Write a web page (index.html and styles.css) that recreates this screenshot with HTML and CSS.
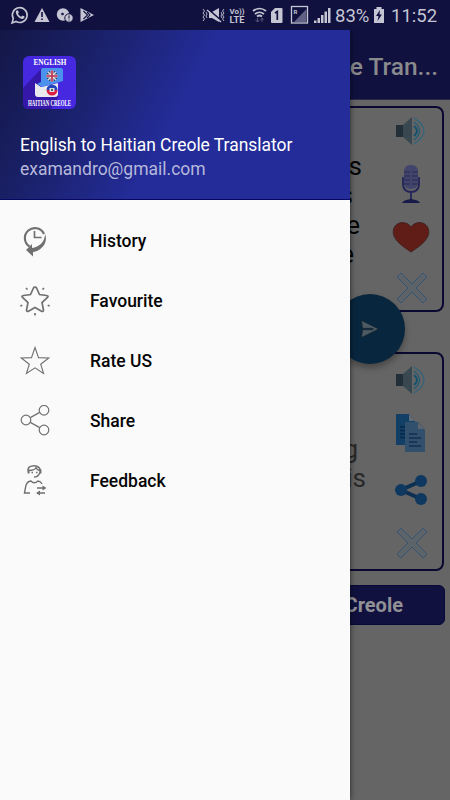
FILE: index.html
```
<!DOCTYPE html>
<html lang="en">
<head>
<meta charset="utf-8">
<title>English to Haitian Creole Translator</title>
<link rel="stylesheet" href="styles.css">
</head>
<body>
<svg class="defs" width="0" height="0">
  <symbol id="speaker" viewBox="0 0 32 28">
    <path d="M1 8h7v12H1z" fill="#222f38"/><path d="M8 8l9-8v28l-9-8z" fill="#394850"/>
    <g fill="none" stroke-width="1.5"><path d="M19 9q6 5 0 10" stroke="#12526f" stroke-width="2"/><path d="M19 5q11 9 0 18" stroke="#285c75"/><path d="M19 1q20 13 0 26" stroke="#3c6478"/></g>
  </symbol>
  <symbol id="cross" viewBox="0 0 32 32">
    <path d="M1 5l4-4 11 11L27 1l4 4-11 11 11 11-4 4-11-11L5 31l-4-4 11-11z" fill="#5c6369" stroke="#365371" stroke-width="1"/>
  </symbol>
</svg>
<div class="screen">
  <header class="status">
    <svg class="notices" viewBox="0 0 100 30" width="100" height="30">
      <path d="M12 23l1.300-4.300a7.400 7.400 0 1 1 2.800 2.800z" fill="none" stroke="#c5c5d3" stroke-width="1.600"/>
      <path d="M16 11c1-1 2-1 2.400.2l.5 1.300-.9 1.200c.8 1.600 1.800 2.400 3.200 3l1.300-1.200 2 1c.5 1-1 2.600-2.600 2.400-3-.4-7-4.700-5.900-7.900z" fill="#c5c5d3"/>
      <path d="M42 8l7.500 14h-15z" fill="#c5c5d3"/><path d="M42 12v5M42 18.500v1.500" stroke="#10113f" stroke-width="1.600"/>
      <circle cx="63" cy="14.500" r="6.200" fill="#c5c5d3"/><circle cx="62.500" cy="14" r="1.300" fill="#10113f"/><circle cx="69" cy="18" r="4.200" fill="#c5c5d3" stroke="#10113f"/><path d="M69 15.500v3M69 19.500v1" stroke="#10113f"/>
      <path d="M80.500 8v14L94 15z" fill="#c5c5d3"/><path d="M83.500 11l4 4-4 4M87 12l3 3-3 3" fill="none" stroke="#10113f" stroke-width="1.100"/>
    </svg>
    <svg viewBox="0 0 130 30" width="130" height="30">
      <g fill="none" stroke="#c5c5d3" stroke-width=".9"><path d="M1 9l1.500 2L1 13l1.500 2L1 17l1.500 2L1 21M4 12l1 2-1 2 1 2M19 12l1 2-1 2 1 2M22 9l-1.500 2 1.500 2-1.500 2 1.500 2-1.500 2 1.500 2"/></g>
      <path d="M7 12h3l7-4v14l-7-4H7z" fill="#c5c5d3"/><path d="M5 8.500l14 12" stroke="#10113f" stroke-width="2"/><path d="M5 10l14 12" stroke="#c5c5d3" stroke-width="1.500"/>
      <text x="27.500" y="14" class="volte" textLength="15" lengthAdjust="spacingAndGlyphs">Vo))</text>
      <text x="27.500" y="22.500" class="volte lte" textLength="15" lengthAdjust="spacingAndGlyphs">LTE</text>
      <g fill="none" stroke="#c5c5d3" stroke-width="1.700"><path d="M51 11q6.500-5 13 0M53 14q4.500-3.500 9 0M55 16.500q2.500-2 5 0"/></g>
      <path d="M55.500 18v4M53.500 20l2 2 2-2M60 22v-4M58.500 20l1.500-2 1.500 2" fill="none" stroke="#55567a"/>
      <path d="M73 8h6.500q1 0 1 1v13q0 1-1 1H70q-1 0-1-1V12z" fill="#c5c5d3"/><path d="M73 13l2.300-1.500V20" fill="none" stroke="#10113f" stroke-width="1.700"/>
      <rect x="89.500" y="6.500" width="16" height="16.500" fill="none" stroke="#c5c5d3" stroke-width="1.300"/><path d="M104.500 9v13H92z" fill="#606184"/><text x="91.500" y="13.500" class="roam">R</text>
      <path d="M112 23v-2.500h2.500V23M115.500 23v-5h2.500v5M119 23v-8h2.500v8M122.500 23V11.500h2.500V23M126 23V8h2.500v15" fill="#c5c5d3"/>
    </svg>
    <span class="charge">83%</span>
    <svg class="battery" viewBox="0 0 12 16" width="12" height="16"><path d="M3.500 0h5v2H11v14H1V2h2.500z" fill="#c5c5d3"/><path d="M7 3L3 9h2.500L4.500 14 9 7.500H6.500z" fill="#10113f"/></svg>
    <span class="clock">11:52</span>
  </header>
  <main class="app">
    <div class="toolbar">e Tran...</div>
    <section class="card source">
      <div class="words"><p>s</p><p class="w2">s</p><p class="w3">e</p><p class="w4">e</p></div>
      <div class="tools">
        <svg class="sound" width="32" height="28"><use href="#speaker"/></svg>
        <svg class="mic" viewBox="0 0 20 38" width="20" height="38"><rect x="3" width="14" height="24" rx="6" fill="#43446b"/><path d="M3 7h6m2 0h6M3 11h6m2 0h6M3 15h6m2 0h6M3 19h6m2 0h6" stroke="#292b58" stroke-width="1"/><path d="M2 12v8q1 7 8 7t8-7v-8M10 27v8" fill="none" stroke="#23255a" stroke-width="1.800"/><path d="M1 38q1-3 9-4 8 1 9 4z" fill="#171949"/></svg>
        <svg class="heart" viewBox="0 0 38 31" width="38" height="31"><path d="M19 5C15-1 5-1 2 6c-4 10 8 18 17 24C28 24 40 16 36 6 33-1 23-1 19 5z" fill="#601c17" stroke="#402522"/></svg>
        <svg class="cross" width="32" height="32"><use href="#cross"/></svg>
      </div>
    </section>
    <section class="card result">
      <div class="words muted"><p>g</p><p>is</p></div>
      <div class="tools">
        <svg class="sound" width="32" height="28"><use href="#speaker"/></svg>
        <svg class="copy" viewBox="0 0 30 38" width="30" height="38"><path d="M0 0h13l6 7v24H0z" fill="#123f66"/><path d="M13 0l6 7h-6z" fill="#626a72"/><path d="M4 13h7M4 16.500h6M4 20h6M4 23.500h6" stroke="#0b2647" stroke-width="1.300"/><path d="M9 8h14l6 7v23H9z" fill="#31506d"/><path d="M22 7l7 9V7z" fill="#656565"/><path d="M22 8v7h6z" fill="#5d646b"/><path d="M13 20h8M13 24h12M13 28h8M13 32h12" stroke="#122c50" stroke-width="1.300"/></svg>
        <svg class="share" viewBox="0 0 32 32" width="32" height="32"><path d="M26 7L6 16l20 9" fill="none" stroke="#0d3052" stroke-width="4"/><g fill="#0e3860"><circle cx="6" cy="16" r="6"/><circle cx="26" cy="7" r="6"/><circle cx="26" cy="25" r="6"/></g></svg>
        <svg class="cross" width="32" height="32"><use href="#cross"/></svg>
      </div>
    </section>
    <div class="language">Creole</div>
  </main>
  <div class="send"><svg viewBox="0 0 18 18" width="18" height="18"><path d="M.5.500L17.500 9 .5 17.500 1.500 9.700H12V8.300H1.500z" fill="#4c5a64" stroke="#17212a" stroke-width=".6"/></svg></div>
  <aside class="drawer">
    <div class="profile">
      <svg class="logo" viewBox="0 0 53 53" width="53" height="53">
        <rect width="53" height="53" rx="6" fill="#4528df"/><path d="M0 32L18 13v21l18 6-8 13H6q-6 0-6-6z" fill="#3518a9"/>
        <path d="M12 27l6 4 17-4v11q0 3-3 3H15q-3 0-3-3z" fill="#e9e9ee"/>
        <path d="M20 12h18q2 0 2 2v11L19 31l-5-3 4-2V14q0-2 2-2z" fill="#4b91ee"/>
        <circle cx="29" cy="20" r="5.500" fill="#26376d"/><path d="M25 16l8 8M33 16l-8 8" stroke="#ddd" stroke-width="1.500"/><path d="M29 14.500v11M23.500 20h11" stroke="#eee" stroke-width="3"/><path d="M29 14.500v11M23.500 20h11" stroke="#bd2948" stroke-width="1.600"/>
        <path d="M23.500 34a5.500 5.500 0 0 1 11 0z" fill="#2444bb"/><path d="M23.500 34a5.500 5.500 0 0 0 11 0z" fill="#d91d43"/><path d="M26.500 32h5v4h-5z" fill="#ddd"/><path d="M28 33h2v2h-2z" fill="#456b61"/>
        <text x="10.500" y="9" class="logo-text" textLength="33" lengthAdjust="spacingAndGlyphs">ENGLISH</text>
        <text x="5" y="50" class="logo-text small" textLength="43" lengthAdjust="spacingAndGlyphs">HAITIAN CREOLE</text>
      </svg>
      <div class="name">English to Haitian Creole Translator</div>
      <div class="email">examandro@gmail.com</div>
    </div>
    <nav>
      <div class="item"><svg viewBox="0 0 30 32"><path d="M9.500 21.500A10 10 0 1 1 24 9" fill="none" stroke="#707070" stroke-width="2.200"/><path d="M14.500 6v6.500h7" fill="none" stroke="#707070" stroke-width="1.700"/><path d="M25 9c3.500 8-3 17-12 18v4.500l-7-6.500 6-6v4c7-1 13-6 13-14z" fill="#707070"/></svg><span>History</span></div>
      <div class="item"><svg viewBox="0 0 30 32"><path d="M15 2q1 0 1.500 1l3 6.500 7 1q2.500.5 1 2l-5.500 5 1.500 7.500q0 2-2 1.200L15 22.500l-6.500 3.700q-2 .8-2-1.200L8 17.500l-5.500-5q-1.500-1.500 1-2l7-1L13.500 3q.5-1 1.500-1z" fill="none" stroke="#707070" stroke-width="1.700"/><path d="M6 3l1.500 1.500M24 3l-1.500 1.500M.3 21l2-.8M29.700 21l-2-.8M15 28v2.500" stroke="#707070" stroke-width="1.700"/></svg><span>Favourite</span></div>
      <div class="item"><svg viewBox="0 0 30 32"><path d="M15 2.500l3.500 10.100 10.200.4-8 6.200 2.900 9.300L15 22.800 6.400 28.500l2.900-9.300-8-6.200 10.200-.4z" fill="none" stroke="#707070" stroke-width="1.100"/></svg><span>Rate US</span></div>
      <div class="item"><svg viewBox="0 0 30 32"><g fill="none" stroke="#707070" stroke-width="1.200"><circle cx="6" cy="15" r="4.800"/><circle cx="24" cy="5.300" r="4.800"/><circle cx="24" cy="25" r="4.800"/><path d="M10.300 12.600l9.400-5.200M10.300 17.400l9.400 5.200"/></g></svg><span>Share</span></div>
      <div class="item"><svg viewBox="0 0 30 32"><g fill="none" stroke="#707070" stroke-width="1.400"><path d="M9 8C6 2 11 .8 14 .8c5 0 8 4 5.500 7.700Q18 12 14 12M9 5.500c5 0 6-1 7-3 1 2 2 3 4 3"/><path d="M8.500 4.500v4M20.500 4.500v4" stroke-width="1.800"/><path d="M10 28H4.500l1.200-6.500q.8-5 5.300-5.500Q14 19.500 18 16q3 .5 4 3M17 23h8M25 28h-8"/></g><path d="M22.500 20.500l4 2.500-4 2.500zM20 25.500L16 28l4 2.500z" fill="#707070"/><path d="M11.500 7.500h1.500M16 7.500h1.500" stroke="#707070" stroke-width="1.300"/></svg><span>Feedback</span></div>
    </nav>
  </aside>
</div>
</body>
</html>
```
FILE: styles.css
```
* { box-sizing: border-box; }
body, p { margin: 0; }
body { font-family: Roboto, sans-serif; }
.defs { position: absolute; }
.screen { position: relative; width: 450px; height: 800px; overflow: hidden; background: #656565; }
.status { display: flex; align-items: center; height: 30px; background: #10113f; color: #c5c5d3; font-size: 18.5px; line-height: 30px; white-space: nowrap; }
.notices { margin-right: 102px; }
.charge { width: 38px; margin-left: 3px; padding-top: 1px; }
.battery { margin-right: 6px; }
.clock { padding-top: 1px; }
.volte { font: bold 8px Roboto, sans-serif; fill: #c5c5d3; }
.lte { font-size: 9px; }
.roam { font: bold 6px Roboto, sans-serif; fill: #c5c5d3; }
.app { display: flex; flex-direction: column; height: 770px; }
.toolbar { height: 70px; padding: 0 12px 0 0; background: #10113f; color: #8a8a8d; font-size: 24.5px; font-weight: 500; line-height: 73px; text-align: right; border-bottom: 1px solid #27284a; }
.card { display: flex; justify-content: flex-end; gap: 31px; margin: 6px 6px 0 7px; height: 206px; border: 2px solid #0a0830; border-radius: 8px; }
.words { padding-top: 44px; text-align: right; font-size: 26px; line-height: 29.3px; color: #050505; }
.w2 { padding-right: 9px; }
.w3 { padding-right: 2px; }
.w4 { padding-right: 8px; }
.tools { display: flex; flex-direction: column; align-items: center; width: 38px; margin-right: 12px; padding-top: 9px; }
.source .words { margin-right: -1px; }
.mic { margin-top: 20px; }
.heart { margin-top: 19px; }
.source .cross { margin: 19px 0 0 1px; }
.result { height: 219px; margin-top: 40px; gap: 26px; }
.muted { padding-top: 81px; color: #282828; }
.muted p:first-child { padding-right: 8px; }
.result .tools { padding-top: 12px; }
.copy { margin-top: 20px; }
.share { margin-top: 22px; }
.result .cross { margin: 21px 0 0 1px; }
.language { height: 40px; margin: 14px 5px 0; padding-right: 41px; border: 1px solid #08083a; border-radius: 6px; background: #11113f; color: #909095; font-size: 20px; font-weight: 700; line-height: 39px; text-align: right; }
.send { position: absolute; left: 335px; top: 294px; width: 70px; height: 70px; padding: 26px; border-radius: 50%; background: #08263e; box-shadow: 0 4px 6px rgba(0,0,0,.3); }
.send svg { display: block; }
.drawer { position: absolute; left: 0; top: 30px; width: 350px; height: 770px; background: #fafafa; box-shadow: 0 0 6px rgba(0,0,0,.65); clip-path: inset(0 -12px 0 0); }
.profile { height: 170px; padding: 26px 20px 0; border-bottom: 1px solid #070862; background: linear-gradient(118deg, #131747 0%, #1a2066 22%, #232c98 50%, #242c99 100%); color: #fff; }
.logo { display: block; margin: 0 0 26px 3px; }
.logo-text { font: bold 8.5px "Liberation Serif", serif; fill: #fff; }
.logo-text.small { font-size: 8px; }
.name { font-size: 17.45px; line-height: 20px; white-space: nowrap; }
.email { margin-top: 3px; font-size: 17.5px; line-height: 22px; color: #b7b9dc; }
nav { padding-top: 11px; }
.item { display: flex; align-items: center; height: 60px; padding-left: 20px; color: #050505; font-size: 17.5px; font-weight: 500; }
.item svg { width: 30px; height: 32px; margin-right: 40px; }
```
